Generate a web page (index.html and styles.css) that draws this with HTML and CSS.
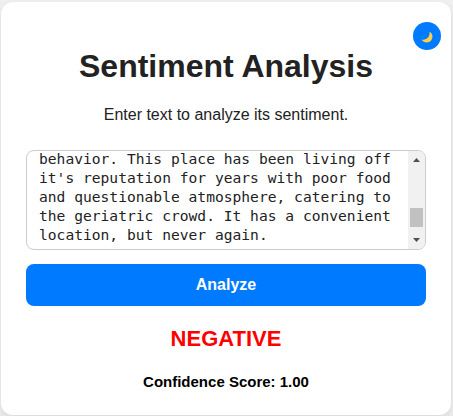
FILE: index.html
```
<!DOCTYPE html>
<html lang="en">
<head>
<meta charset="utf-8">
<title>Sentiment Analysis</title>
<link rel="stylesheet" href="styles.css">
</head>
<body>
<main class="card">
  <button class="theme-toggle" aria-label="Toggle theme">
    <svg width="12" height="12" viewBox="0 0 12 12"><path d="M8.4.8C11.6 2.2 12.4 6.2 10.3 9.2 8 12.3 2.8 12.3.4 8.6 3 9.2 5.6 8.4 7.2 6.3 8.5 4.6 8.9 2.6 8.4.8Z" fill="#f9d046"/></svg>
  </button>
  <h1>Sentiment Analysis</h1>
  <p class="intro">Enter text to analyze its sentiment.</p>
  <div class="editor">
    <div class="text">behavior. This place has been living off
it's reputation for years with poor food
and questionable atmosphere, catering to
the geriatric crowd. It has a convenient
location, but never again.</div>
    <div class="scrollbar">
      <svg width="17" height="17" viewBox="0 0 17 17"><path d="M5 11 8.5 7 12 11Z" fill="#505050"/></svg>
      <div class="thumb"></div>
      <svg width="17" height="17" viewBox="0 0 17 17"><path d="M5 6 8.5 10 12 6Z" fill="#505050"/></svg>
    </div>
  </div>
  <button class="analyze">Analyze</button>
  <div class="result">NEGATIVE</div>
  <div class="score">Confidence Score: 1.00</div>
</main>
</body>
</html>
```
FILE: styles.css
```
* { box-sizing: border-box; }
body {
  margin: 0;
  padding: 2px 2px 1px 1px;
  height: 416px;
  overflow: hidden;
  background: #f0f0f0;
  font-family: "Liberation Sans", Arial, sans-serif;
  color: #222;
}
.card {
  position: relative;
  display: flex;
  flex-direction: column;
  width: 450px;
  height: 413px;
  padding: 46px 25px 0;
  background: #fff;
  border-radius: 12px;
  box-shadow: 0 4px 10px rgba(0, 0, 0, .1);
  text-align: center;
}
.theme-toggle {
  position: absolute;
  top: 20px;
  right: 10px;
  width: 28px;
  height: 28px;
  padding: 1px 0 0;
  display: flex;
  align-items: center;
  justify-content: center;
  border: 0;
  border-radius: 50%;
  background: #007bff;
}
h1 { margin: 0; font-size: 32px; line-height: 37px; }
.intro { margin: 21px 0 0; font-size: 16px; line-height: 18px; }
.editor {
  display: flex;
  height: 100px;
  margin-top: 26px;
  border: 1px solid #ccc;
  border-radius: 8px;
  overflow: hidden;
}
.text {
  flex: 1;
  margin-top: -2px;
  padding-left: 12px;
  font: 14.6px/19px "DejaVu Sans Mono", monospace;
  letter-spacing: .01px;
  white-space: pre;
  text-align: left;
}
.scrollbar {
  display: flex;
  flex-direction: column;
  align-items: center;
  justify-content: space-between;
  width: 17px;
  background: #f1f1f1;
}
.thumb { width: 13px; height: 19px; margin-top: 35px; background: #c1c1c1; }
.analyze {
  height: 42px;
  margin-top: 14px;
  border: 0;
  border-radius: 8px;
  background: #007bff;
  color: #fff;
  font: bold 16px "Liberation Sans", Arial, sans-serif;
}
.result { margin-top: 20px; font-size: 22px; line-height: 25px; font-weight: bold; color: #f00; }
.score { margin-top: 22px; font-size: 15px; line-height: 17px; font-weight: bold; color: #000; }
```
